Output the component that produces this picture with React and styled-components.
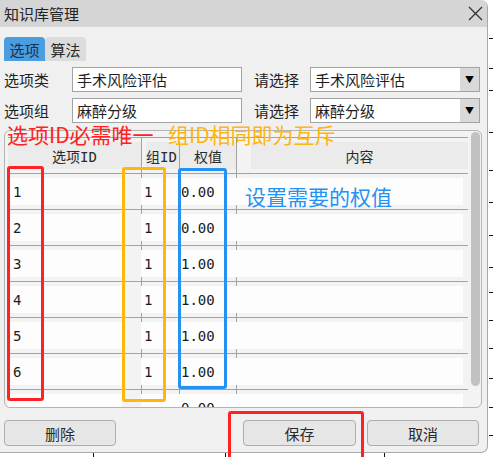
import styled, { createGlobalStyle } from "styled-components";

const GlobalStyle = createGlobalStyle`
  html, body {
    margin: 0;
    padding: 0;
    background: #ffffff;
    overflow: hidden;
  }
  body {
    font-family: "Noto Sans CJK SC", "Noto Sans", sans-serif;
    color: #1e1e1e;
  }
`;

const UI_FONT = `"Noto Sans CJK SC", "Noto Sans", sans-serif`;
const GRID_FONT = `"DejaVu Sans Mono", "Noto Sans CJK SC", monospace`;

// 背景表格 + 弹窗
export const Page = styled.div`
  display: grid;
  grid-template-columns: 488px 5px;
  grid-template-rows: 453px 4px;
  width: 493px;
  height: 457px;
`;

export const EdgeRight = styled.svg`
  display: block;
  width: 5px;
  height: 453px;
`;

export const EdgeBottom = styled.svg`
  display: block;
  width: 488px;
  height: 4px;
`;

export const Dialog = styled.div`
  position: relative;
  display: flex;
  flex-direction: column;
  width: 488px;
  height: 453px;
  box-sizing: border-box;
  background: #f0f0f0;
  border-right: 1px solid #a9a9a9;
  border-bottom: 1px solid #a9a9a9;
  border-radius: 0 7px 7px 0;
`;

export const TitleBar = styled.div`
  display: flex;
  align-items: center;
  justify-content: space-between;
  height: 27px;
  padding: 0 4px;
  background: #d5d5d5;
  border-top-right-radius: 7px;
  font-size: 15px;
  color: #222;
`;

export const CloseIcon = styled.svg`
  width: 15px;
  height: 15px;
`;

export const Body = styled.div`
  display: flex;
  flex-direction: column;
  padding: 10px 0 0 4px;
`;

export const Tabs = styled.div`
  display: flex;
  height: 24px;
`;

export const Tab = styled.div`
  width: 41px;
  display: flex;
  align-items: center;
  justify-content: center;
  font-size: 15px;
  border-radius: 4px 4px 0 0;
  background: ${(p) => (p.$active ? "#4c9de0" : "#dcdcdc")};
  color: ${(p) => (p.$active ? "#12324f" : "#2a2a2a")};
`;

export const FieldRow = styled.div`
  display: flex;
  align-items: center;
  height: 25px;
  margin-top: 6px;
`;

export const Label = styled.div`
  width: ${(p) => p.$w}px;
  margin-left: ${(p) => p.$ml || 0}px;
  font-size: 15px;
  color: #222;
`;

export const TextBox = styled.div`
  display: flex;
  align-items: center;
  width: 170px;
  height: 25px;
  box-sizing: border-box;
  padding-left: 4px;
  background: #ffffff;
  border: 1px solid #a3a3a3;
  font-size: 15px;
  color: #1e1e1e;
`;

export const SelectBox = styled(TextBox)`
  justify-content: space-between;
`;

export const Arrow = styled.div`
  display: flex;
  align-items: center;
  justify-content: center;
  width: 19px;
  height: 100%;
  background: #d9d9d9;
  font-size: 9px;
  color: #000;
`;

export const Panel = styled.div`
  display: flex;
  width: 478px;
  height: 278px;
  margin-top: 7px;
  box-sizing: border-box;
  border: 1px solid #b4b4b4;
  border-radius: 6px;
  background: #f3f3f3;
  overflow: hidden;
`;

export const Grid = styled.div`
  width: 460px;
  margin: 6px 0 0 3px;
  font-family: ${GRID_FONT};
  font-size: 14px;
  color: #1a1a1a;
`;

export const Row = styled.div`
  display: grid;
  grid-template-columns: 133px 38px 57px 232px;
  height: 35px;
  border-bottom: 1px solid #a2a2a2;
  ${(p) => p.$head && "border-top: 1px solid #a2a2a2;"}
`;

export const HeadCell = styled.div`
  display: flex;
  align-items: center;
  justify-content: ${(p) => p.$align || "center"};
  padding: ${(p) => (p.$first ? 0 : 4)}px 0 ${(p) => (p.$first ? 0 : 4)}px ${(p) => p.$pad || 0}px;
  margin: ${(p) => (p.$first ? 4 : 0)}px 0;
  background: #ebebeb;
  background-clip: content-box;
  border-left: ${(p) => (p.$first ? "none" : "1px solid #a2a2a2")};
  white-space: nowrap;
  color: #2a2a2a;
`;

export const Cell = styled.div`
  display: flex;
  padding: 4px ${(p) => p.$gap || 0}px 4px 0;
  background: ${(p) =>
    p.$first
      ? "none"
      : "linear-gradient(#a2a2a2, #a2a2a2) left top / 1px 5px no-repeat, linear-gradient(#a2a2a2, #a2a2a2) left bottom / 1px 5px no-repeat"};
`;

export const CellBox = styled.div`
  flex: 1;
  display: flex;
  align-items: center;
  padding-left: ${(p) => p.$pad}px;
  background: #fdfdfd;
`;

export const ScrollThumb = styled.div`
  width: 9px;
  height: 254px;
  margin: 1px 0 0 3px;
  border-radius: 5px;
  background: #c1c1c1;
`;

export const Buttons = styled.div`
  display: flex;
  align-items: center;
  margin-top: 12px;
`;

export const Button = styled.div`
  display: flex;
  align-items: center;
  justify-content: center;
  width: ${(p) => p.$w}px;
  height: 26px;
  margin-left: ${(p) => p.$ml || 0}px;
  box-sizing: border-box;
  border: 1px solid #adadad;
  border-radius: 4px;
  background: #e6e6e6;
  font-size: 15px;
  color: #2a2a2a;
`;

// 标注层
export const Note = styled.div`
  position: absolute;
  left: ${(p) => p.$x}px;
  top: ${(p) => p.$y}px;
  font-family: ${UI_FONT};
  font-size: 21px;
  line-height: 24px;
  white-space: nowrap;
  color: ${(p) => p.$color};
`;

export const Mark = styled.div`
  position: absolute;
  left: ${(p) => p.$x}px;
  top: ${(p) => p.$y}px;
  width: ${(p) => p.$w}px;
  height: ${(p) => p.$h}px;
  box-sizing: border-box;
  border: 3px solid ${(p) => p.$color};
  border-radius: 3px;
`;

const RED = "#ff2222";
const ORANGE = "#ffb60d";
const BLUE = "#2392f2";

const rows = [
  ["1", "1", "0.00"],
  ["2", "1", "0.00"],
  ["3", "1", "1.00"],
  ["4", "1", "1.00"],
  ["5", "1", "1.00"],
  ["6", "1", "1.00"],
  ["", "", "0.00"],
];

const rightTicks = [38, 68, 90, 132, 170, 202, 235, 267, 292, 320, 348, 378, 407, 435];
const bottomTicks = [93, 225, 384];

function App() {
  return (
    <>
      <GlobalStyle />
      <Page>
        <Dialog>
          <TitleBar>
            <span>知识库管理</span>
            <CloseIcon viewBox="0 0 15 15">
              <path d="M1 1 L14 14 M14 1 L1 14" stroke="#333" strokeWidth="1.3" fill="none" />
            </CloseIcon>
          </TitleBar>
          <Body>
            <Tabs>
              <Tab $active>选项</Tab>
              <Tab>算法</Tab>
            </Tabs>
            <FieldRow>
              <Label $w={68}>选项类</Label>
              <TextBox>手术风险评估</TextBox>
              <Label $w={56} $ml={12}>请选择</Label>
              <SelectBox>
                手术风险评估
                <Arrow>▼</Arrow>
              </SelectBox>
            </FieldRow>
            <FieldRow>
              <Label $w={68}>选项组</Label>
              <TextBox>麻醉分级</TextBox>
              <Label $w={56} $ml={12}>请选择</Label>
              <SelectBox>
                麻醉分级
                <Arrow>▼</Arrow>
              </SelectBox>
            </FieldRow>
            <Panel>
              <Grid>
                <Row $head>
                  <HeadCell $first>选项ID</HeadCell>
                  <HeadCell $align="flex-start" $pad={4}>组ID</HeadCell>
                  <HeadCell>权值</HeadCell>
                  <HeadCell $pad={14}>内容</HeadCell>
                </Row>
                {rows.map((r, i) => (
                  <Row key={i}>
                    <Cell $first $gap={19}>
                      <CellBox $pad={5}>{r[0]}</CellBox>
                    </Cell>
                    <Cell>
                      <CellBox $pad={3}>{r[1]}</CellBox>
                    </Cell>
                    <Cell>
                      <CellBox $pad={2}>{r[2]}</CellBox>
                    </Cell>
                    <Cell $gap={5}>
                      <CellBox $pad={4} />
                    </Cell>
                  </Row>
                ))}
              </Grid>
              <ScrollThumb />
            </Panel>
            <Buttons>
              <Button $w={112}>删除</Button>
              <Button $w={113} $ml={127}>保存</Button>
              <Button $w={112} $ml={11}>取消</Button>
            </Buttons>
          </Body>

          <Note $x={7} $y={122} $color={RED}>选项ID必需唯一</Note>
          <Note $x={168} $y={122} $color={ORANGE}>组ID相同即为互斥</Note>
          <Note $x={245} $y={184} $color={BLUE}>设置需要的权值</Note>
          <Mark $x={7} $y={166} $w={37} $h={235} $color={RED} />
          <Mark $x={122} $y={167} $w={44} $h={235} $color={ORANGE} />
          <Mark $x={178} $y={168} $w={49} $h={221} $color={BLUE} />
          <Mark $x={228} $y={411} $w={136} $h={50} $color={RED} />
        </Dialog>
        <EdgeRight viewBox="0 0 5 453">
          {rightTicks.map((y) => (
            <line key={y} x1="1" x2="5" y1={y + 0.5} y2={y + 0.5} stroke="#111" strokeWidth="1" />
          ))}
        </EdgeRight>
        <EdgeBottom viewBox="0 0 488 4">
          {bottomTicks.map((x) => (
            <line key={x} x1={x + 0.5} x2={x + 0.5} y1="0" y2="4" stroke="#111" strokeWidth="1" />
          ))}
        </EdgeBottom>
      </Page>
    </>
  );
}

export default App;
